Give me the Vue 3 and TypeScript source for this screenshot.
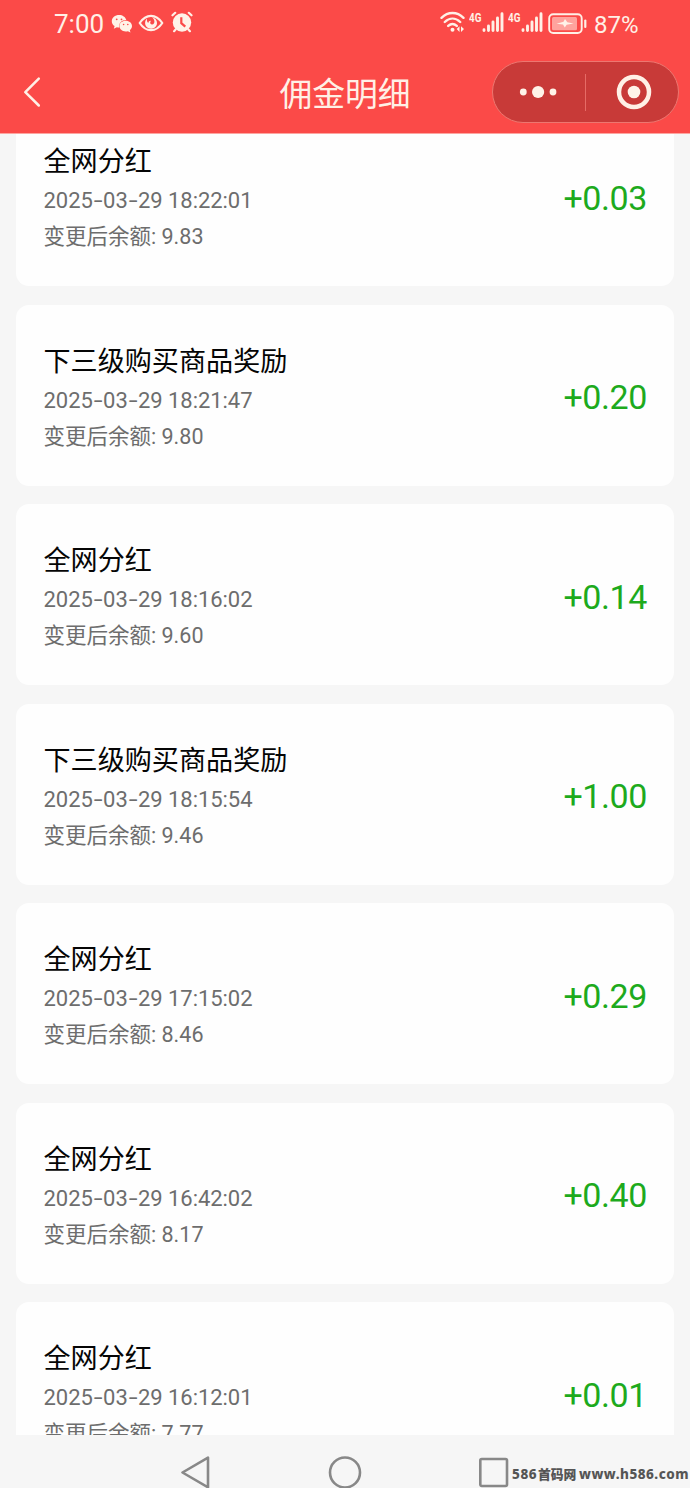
<script setup lang="ts">
interface Entry {
  title: string
  day: string[]
  time: string
  balance: string
  amount: string
}

const entry = (title: string, time: string, balance: string, amount: string): Entry => ({
  title,
  day: ['2025', '03', '29'],
  time,
  balance,
  amount,
})

const entries: Entry[] = [
  entry('全网分红', '18:22:01', '9.83', '+0.03'),
  entry('下三级购买商品奖励', '18:21:47', '9.80', '+0.20'),
  entry('全网分红', '18:16:02', '9.60', '+0.14'),
  entry('下三级购买商品奖励', '18:15:54', '9.46', '+1.00'),
  entry('全网分红', '17:15:02', '8.46', '+0.29'),
  entry('全网分红', '16:42:02', '8.17', '+0.40'),
  entry('全网分红', '16:12:01', '7.77', '+0.01'),
]
</script>

<template>
  <div class="screen">
    <header class="top">
      <div class="status">
        <span class="clock">7:00</span>
        <svg class="wechat" width="22" height="20" viewBox="0 0 22 20">
          <path class="cream" d="M8.2 1C3.900 1 .8 3.700.8 7.200c0 2 1 3.700 2.800 4.900l-.8 2.600 3-1.500c.9.200 1.600.3 2.500.3C7.500 9.500 10.500 6 15.300 6 14.500 3 11.500 1 8.200 1z" />
          <path class="cream" d="M14.700 6.700c-3.700 0-6.300 2.400-6.300 5.400s2.700 5.400 6.300 5.400c.8 0 1.500-.1 2.200-.3l2.600 1.400-.7-2.300c1.400-1 2.200-2.500 2.200-4.200 0-3-2.700-5.400-6.300-5.400z" />
          <g class="red"><circle cx="5.700" cy="5.300" r=".9" /><circle cx="10.500" cy="5.300" r=".9" /><circle cx="12.600" cy="10.500" r=".8" /><circle cx="16.800" cy="10.500" r=".8" /></g>
        </svg>
        <svg class="eye" width="26" height="20" viewBox="0 0 26 20">
          <path class="line" stroke-width="2.200" d="M1.700 10C5 5 8.700 2.800 13 2.800S21 5 24.300 10C21 15 17.300 17.200 13 17.200S5 15 1.700 10z" />
          <path class="cream" d="M14 4.200c3 .7 5 3 5 5.900 0 3.300-2.600 5.700-5.900 5.700-3.400 0-6-2.400-6-5.700 0-1.800.7-3.300 1.900-4.300-.3 1.900.1 3.600 1.300 4.300.3-1.600 1.300-2.400 2.600-2.200-1.300 1.300-.7 3.300.9 3.500 1.700.2 2.800-1.300 2.600-3.200-.2-1.700-1-3-2.400-4z" />
        </svg>
        <svg class="alarm" width="22" height="22" viewBox="0 0 22 22">
          <circle class="cream" cx="11" cy="11.500" r="9.200" />
          <path class="line" stroke-width="2.200" d="M1.500 4.300l2.700-2.500M20.500 4.300l-2.700-2.500M4.600 18.500l-1.500 1.700M17.400 18.500l1.500 1.700" />
          <path class="redline" d="M10.300 6.300v5.900l4 3.500" />
        </svg>
        <span class="spring"></span>
        <svg class="wifi" width="26" height="22" viewBox="0 0 26 22">
          <path class="line" stroke-width="2.400" d="M1.500 6.800C8 .4 17 .4 23.500 6.800M4.800 11c4.700-4.500 10.700-4.500 15.400 0M8.200 14.900c2.700-2.500 5.900-2.500 8.600 0" />
          <circle class="cream" cx="12.500" cy="18.800" r="2" />
          <path class="cream" d="M19.500 15.300v5.600l-2.800-2.800zM21 15.300v5.600l3-2.800z" />
        </svg>
        <div v-for="n in 2" :key="n" class="signal">
          <span class="net">4G</span>
          <svg width="22" height="21" viewBox="0 0 22 21">
            <path class="line" stroke-width="2.900" d="M2 17.800v.7M6.500 14v4.500M11 10v8.500M15.500 6v12.500M20 1.800v16.700" />
          </svg>
        </div>
        <svg class="battery" width="40" height="22" viewBox="0 0 40 22">
          <rect class="line" x="1.200" y="1.200" width="32.500" height="18.800" rx="4" stroke-width="1.900" />
          <rect class="charge" x="4" y="4" width="25" height="13.200" rx="1.500" />
          <path class="cream" d="M17 6l-1.500 2.800-7 2 6.500.8 1.800 3 1.800-2.800 7-1.300-6.300-1.200z" />
          <path class="line" stroke-width="2.200" d="M37.300 7.500v6.500" />
        </svg>
        <span class="percent">87%</span>
      </div>
      <div class="title-bar">
        <svg class="back" width="20" height="32" viewBox="0 0 20 32">
          <path class="line" stroke-width="2.500" d="M17.800 2.700L4.300 16.200l13.500 13.300" />
        </svg>
        <h1>佣金明细</h1>
        <div class="capsule">
          <svg class="dots" width="40" height="16" viewBox="0 0 40 16">
            <g class="cream"><circle cx="5.300" cy="8" r="3.400" /><circle cx="20.100" cy="8" r="6.100" /><circle cx="35" cy="8" r="3.400" /></g>
          </svg>
          <span class="divider"></span>
          <svg class="target" width="36" height="36" viewBox="0 0 36 36">
            <circle class="line" cx="18" cy="18" r="15" stroke-width="4.500" />
            <circle class="cream" cx="18" cy="18" r="6.300" />
          </svg>
        </div>
      </div>
    </header>

    <main class="viewport">
      <div class="list">
        <article v-for="item in entries" :key="item.time" class="card">
          <div class="info">
            <h2>{{ item.title }}</h2>
            <p class="date">{{ item.day[0] }}<span class="dash">-</span>{{ item.day[1] }}<span class="dash">-</span>{{ item.day[2] }} {{ item.time }}</p>
            <p class="balance">变更后余额: {{ item.balance }}</p>
          </div>
          <span class="amount">{{ item.amount }}</span>
        </article>
      </div>
    </main>

    <footer class="nav">
      <svg class="nav-back" width="32" height="36" viewBox="0 0 32 36">
        <path class="gray" d="M28 3.700v29.600L2.500 18.500z" />
      </svg>
      <svg class="nav-home" width="36" height="36" viewBox="0 0 36 36">
        <circle class="gray" cx="18" cy="18.500" r="15" />
      </svg>
      <svg class="nav-recent" width="32" height="36" viewBox="0 0 32 36">
        <rect class="gray" x="2.300" y="5" width="26.700" height="27" rx="1.500" />
      </svg>
      <div class="watermark"><span class="num">586</span><span class="cjk">首码网</span><span class="site">www.h586.com</span></div>
    </footer>
  </div>
</template>

<style>
body {
  margin: 0;
  overflow: hidden;
}
</style>

<style scoped>
.screen {
  width: 690px;
  height: 1488px;
  display: flex;
  flex-direction: column;
  overflow: hidden;
  background: #f6f6f6;
  font-family: "Roboto", "Noto Sans CJK SC", sans-serif;
}
h1, h2, p { margin: 0; font-weight: 400; }
svg { display: block; flex: none; }
.cream { fill: #fff3e8; }
.red { fill: #fb4a48; }
.line { fill: none; stroke: #fff0e6; stroke-linecap: round; stroke-linejoin: round; }
.redline { fill: none; stroke: #fb4a48; stroke-width: 2.200; }
.charge { fill: #ffa39d; }
.top {
  flex: none;
  height: 133px;
  background: #fb4a48;
  border-bottom: 1px solid #fda5a0;
  color: #fff0e6;
}
.status {
  height: 47px;
  display: flex;
  align-items: center;
  padding-left: 54px;
  padding-right: 51px;
}
.clock { font-size: 26px; width: 51px; line-height: 47px; white-space: nowrap; padding-top: 2px; }
.wechat { margin-left: 6px; }
.eye { margin-left: 5px; margin-top: -2px; }
.alarm { margin-left: 7px; margin-top: -3px; }
.spring { flex: 1; }
.wifi { margin-right: 3px; margin-top: -3px; }
.signal { display: flex; width: 35px; margin-right: 4px; margin-top: -2px; }
.signal svg { margin-left: auto; }
.net { font: 700 12px/12px "Roboto", sans-serif; width: 12px; transform: scaleX(.82); transform-origin: left; }
.battery { margin-left: 1px; }
.percent { font: 400 24px/47px "Roboto", sans-serif; width: 45px; margin-left: 6px; padding-top: 3px; }
.title-bar {
  height: 86px;
  display: grid;
  grid-template-columns: 198px 1fr 198px;
  align-items: center;
}
.back { margin-left: 21px; margin-top: 3px; }
h1 { text-align: center; font-family: "Noto Sans CJK SC", sans-serif; font-size: 32.800px; padding-top: 4px; height: 82px; line-height: 82px; }
.capsule {
  box-sizing: border-box;
  width: 187px;
  height: 62px;
  margin-top: 4px;
  border: 1px solid #ed7770;
  border-radius: 31px;
  background: #c83a38;
  display: flex;
  align-items: center;
}
.dots { margin-left: 25px; }
.divider { width: 1px; height: 37px; margin-left: 27px; background: #e66b66; }
.target { margin-left: 30px; }
.viewport { height: 1301px; flex: none; overflow: hidden; }
.list {
  display: flex;
  flex-direction: column;
  gap: 18.500px;
  margin: -28.800px 16px 0;
}
.card {
  box-sizing: border-box;
  height: 181px;
  flex: none;
  padding: 35px 27px 33px 27.500px;
  border-radius: 13px;
  background: #fefefe;
  display: flex;
  justify-content: space-between;
  align-items: center;
}
h2 { color: #050505; font-family: "Noto Sans CJK SC", sans-serif; font-size: 27.100px; line-height: 40px; height: 40px; }
.date { color: #6d6d6d; font-size: 22px; letter-spacing: -.05px; line-height: 42px; height: 40px; white-space: nowrap; }
.dash { display: inline-block; width: 10.300px; text-align: center; transform: scaleX(1.450); }
.balance { color: #6d6d6d; font-size: 21.500px; line-height: 33px; height: 33px; }
.amount { color: #1daa1d; font-size: 34px; letter-spacing: -.4px; line-height: 50px; padding-top: 2px; }
.nav { height: 53px; display: flex; align-items: flex-start; }
.nav svg { margin-top: 19px; }
.gray { fill: none; stroke: #888; stroke-width: 2.600; stroke-linejoin: round; }
.nav .nav-back { margin-left: 180px; }
.nav .nav-home { margin-left: 115px; }
.nav .nav-recent { margin-left: 115px; }
.watermark {
  display: flex;
  align-items: center;
  height: 20px;
  margin-top: 29px;
  margin-left: 2px;
  white-space: nowrap;
  color: #555;
  font: 800 13.500px/20px "Noto Sans", "Noto Sans CJK SC", sans-serif;
}
.num { width: 26px; letter-spacing: .6px; }
.cjk { width: 41px; font-family: "Noto Sans CJK SC", sans-serif; font-size: 12.800px; font-weight: 900; }
.site { letter-spacing: .5px; }
</style>
